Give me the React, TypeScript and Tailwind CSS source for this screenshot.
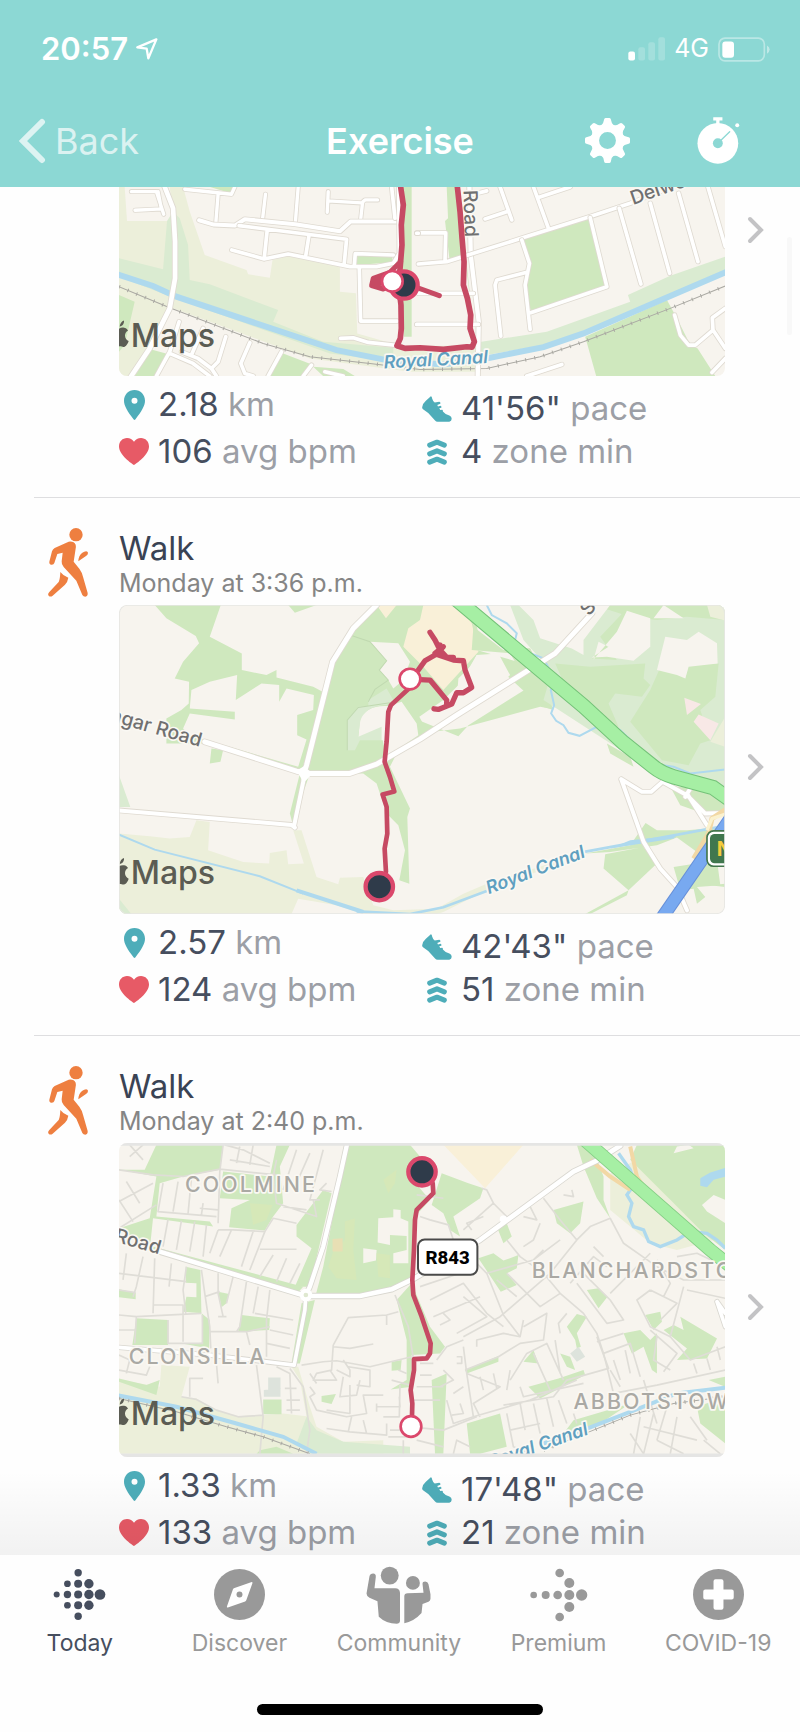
import type { ReactNode } from "react";

const CREAM = "#f7f4ee";
const GREEN = "#cfe8be";
const MINT = "#daebd1";
const OLIVE = "#ecefda";
const WATER = "#aed9ee";
const ROUTE = "#c64a63";

/* ---------- map primitives ---------- */

function Road({ d, w = 13, edge = "#dfdad1" }: { d: string; w?: number; edge?: string }) {
  return (
    <g fill="none" strokeLinecap="round" strokeLinejoin="round">
      <path d={d} stroke={edge} strokeWidth={w + 5} />
      <path d={d} stroke="#fff" strokeWidth={w} />
    </g>
  );
}

function Rail({ d }: { d: string }) {
  return (
    <g fill="none" stroke="#aaa9a3">
      <path d={d} strokeWidth={3} />
      <path d={d} strokeWidth={11} strokeDasharray="3 25" />
    </g>
  );
}

function Route({ d, w = 14 }: { d: string; w?: number }) {
  return <path d={d} fill="none" stroke={ROUTE} strokeWidth={w} strokeLinejoin="round" strokeLinecap="round" />;
}

function StartDot({ x, y }: { x: number; y: number }) {
  return <circle cx={x} cy={y} r={31} fill="#fff" stroke="#db486c" strokeWidth={8} />;
}

function EndDot({ x, y }: { x: number; y: number }) {
  return <circle cx={x} cy={y} r={41} fill="#2f3b4a" stroke="#db486c" strokeWidth={13} />;
}

function Attribution({ y }: { y: number }) {
  return (
    <g fill="#5b5c53">
      <path
        transform={`translate(28 ${y})`}
        d="M0-54C5-57 10-58 15-57C20-57 24-53 27-49C21-45 18-40 18-33C18-25 23-20 29-17C27-10 23-3 17 0C11 2 7-2 0-1ZM2-61C3-70 8-77 15-79C16-71 11-62 2-61Z"
      />
      <text x={63} y={y} className="text-[96px] font-medium">
        Maps
      </text>
    </g>
  );
}

function Label({
  x,
  y,
  rotate = 0,
  className,
  children,
}: {
  x: number;
  y: number;
  rotate?: number;
  className: string;
  children: ReactNode;
}) {
  return (
    <text
      transform={`translate(${x} ${y}) rotate(${rotate})`}
      stroke="#faf8f3"
      strokeWidth={10}
      strokeLinejoin="round"
      paintOrder="stroke"
      className={className}
    >
      {children}
    </text>
  );
}

const ROAD_LABEL = "fill-[#707070] text-[58px] font-medium";
const WATER_LABEL = "fill-[#5f9fc0] text-[54px] font-semibold italic";
const TOWN_LABEL = "fill-[#aaa9a4] text-[64px] font-medium tracking-widest";

/* ---------- maps ---------- */

function MapCanalLoop() {
  return (
    <svg viewBox="28 6 1816 567" preserveAspectRatio="xMidYMid slice" className="block h-[189px] w-full rounded-b-lg" role="img" aria-label="Route map">
      <rect x={0} y={0} width={1900} height={600} fill={CREAM} />
      <path fill={OLIVE} d="M28 6H220L240 80L285 210L410 255L415 268L480 278L488 225L560 208L690 240V320L738 325L742 445L870 482H1110V560H900L600 520L190 370L120 500L60 573H28Z" />
      <path fill={CREAM} d="M45 6H180L192 108H52Z" />
      <path fill={MINT} d="M28 220L160 253L172 108L190 80L210 100L235 180L240 285L300 298L505 375L490 410L640 470L850 488V530L660 505L195 340L28 275Z" />
      <path fill={MINT} d="M1100 472L1310 440L1560 350L1553 330L1680 272L1845 215V270L1640 350L1420 440L1300 480L1100 515Z" />
      <g fill={GREEN}>
        <path d="M28 330L75 350L45 480L28 500ZM125 493L185 510L140 573H75ZM520 505L610 540L575 573H480ZM610 545L700 552L735 573H640Z" />
        <path d="M1240 160L1437 98L1490 302L1262 380L1245 290L1258 235Z" />
        <path d="M1425 455L1670 345L1700 400L1740 480L1762 490L1815 573H1458Z" />
        <path d="M868 6H905V455H882ZM1010 6H1045L1095 470L1075 300L1065 215L1018 220L1005 108L1014 100Z" />
        <path d="M735 212H845L850 232L740 240ZM300 6H370L360 24Z" />
      </g>
      <path fill="none" stroke={WATER} strokeWidth={18} d="M20 267L130 303L200 335L680 495L830 525L1000 538L1140 518L1300 486L1420 445L1640 350L1850 260" />
      <Rail d="M28 305L180 368L460 475L600 515L780 535L930 553L1130 550L1290 515L1420 470L1680 370L1845 303" />
      <Road d="M65 20H140L162 88M145 20L155 72L76 76M225 13L365 28L375 6M325 28L318 115M467 28L458 104M565 6L556 118M655 20L652 82M655 48L755 54L765 45H803M758 52L752 105" w={10} />
      <Road d="M268 106L312 119L375 122L405 103L556 118L690 139L722 110H865" w={12} />
      <Road d="M388 122L710 163L703 235M472 137L463 222M597 153L588 210M366 195L463 222L535 207L720 245H800L850 235L868 205L866 6M733 243L736 206L850 210M748 245L752 408H862M692 460L730 458L775 472L870 482M845 6L855 100" w={11} />
      <Road d="M165 6L190 70L196 170V280L180 370L120 490L60 580" w={14} />
      <Road d="M208 410L180 500L140 573M180 505L250 535L300 573M215 500L265 520L305 550L325 530L348 455M305 550L320 573M280 430L245 510M420 473L393 535L405 565L430 573M515 500L475 573M605 540L580 573M645 560L700 573" w={11} />
      <Road d="M1078 6L1082 210L1106 410L1103 573" w={13} />
      <Road d="M925 237L1010 230L1240 158L1440 95L1560 55L1650 20M1005 225L1007 144H920M1130 18L1090 28M1170 6L1205 105M1192 80L1125 102M1270 6L1315 130M1285 38L1380 6" w={11} />
      <Road d="M1235 165L1258 235L1245 300L1260 433M1250 262L1160 285L1155 300L1172 453M1262 383L1490 305L1440 98M1527 70L1592 297M1620 55L1678 265M1705 25L1763 230M1793 6L1845 185" w={11} />
      <Road d="M925 145L920 145M925 325H1090M920 418H1105M1355 538L1250 573M1693 390L1710 450L1735 480H1755L1808 435L1845 490M1808 435L1806 398L1845 370M1805 562L1845 520" w={11} />
      <Label x={1060} y={16} rotate={88} className={ROAD_LABEL}>Road</Label>
      <Label x={1568} y={60} rotate={-19} className={ROAD_LABEL}>Delwood</Label>
      <Label x={822} y={550} rotate={-3} className={WATER_LABEL}>Royal Canal</Label>
      <Route w={17} d="M872 6L880 60L874 120L876 180L872 230L866 300L873 360L874 430L871 460L861 482L885 490L930 488L1000 493L1070 485L1086 486L1093 470L1080 430L1082 390L1072 340L1060 300L1062 230L1056 160L1050 80L1042 6" />
      <Route w={15} d="M872 230L840 262L790 280L785 302L820 312L850 300L800 292L830 275M900 300L988 332" />
      <EndDot x={882} y={300} />
      <StartDot x={847} y={289} />
      <Attribution y={485} />
    </svg>
  );
}

function MapAshtown() {
  return (
    <svg viewBox="28 15 1816 926" preserveAspectRatio="xMidYMid slice" className="block h-[309px] w-full rounded-lg" role="img" aria-label="Route map">
      <rect x={0} y={0} width={1900} height={960} fill={CREAM} />
      <path fill={OLIVE} d="M28 700L120 708L180 715L240 710L260 660L300 665L295 750L400 785L478 790L480 758L530 750L535 792L582 790L550 690L575 690L620 830L685 852L690 832L760 830L790 915L850 930L980 925L1060 880L1130 850L1240 815L1350 780V790L1130 870L1000 935L980 941H28ZM565 895L545 941H760L680 915Z" />
      <g fill={GREEN}>
        <path d="M135 15H333L300 110L396 160V210L470 225L500 210V232L610 260L638 275L665 190L720 105L790 15H1085L1105 100L1100 150L1240 190L1190 155L1200 140L1260 145L1330 330L1290 318L1140 180L1100 165L1085 190L1050 250L1000 300L928 350L955 400L925 425L860 460L840 500L900 625L892 650L898 850L868 840L885 750L865 675L830 640L800 550L760 520H600L548 670L540 640L570 520L280 430L170 430L170 355L215 330L237 310L238 245L195 235L220 185L268 130L258 108L170 55Z" />
        <path d="M535 15H620L555 38ZM565 345L640 310L600 430L562 405ZM305 445L340 450L332 485L300 490Z" />
        <path d="M1450 15H1845V60L1640 60L1560 40Z" />
        <path d="M900 350L1045 408L1075 375L1330 215L1345 260L1320 325L1290 320L1050 385L925 400Z" />
      </g>
      <g fill={CREAM}>
        <path d="M245 270L300 245L382 225L378 300L455 250L508 255V305L530 265L612 285L610 330L562 345V405L590 418L565 500L240 405L220 385L240 340L375 358V335L240 325Z" />
        <path d="M780 125L865 130L900 185L880 240L850 265L835 240L808 210L830 182ZM750 360C760 330 790 315 835 318L875 305L920 370L925 405L830 470L818 420L745 412ZM1045 235L1085 195L1100 165L1165 160L1200 225L1080 330L1040 300Z" />
      </g>
      <path fill={MINT} d="M712 450V360L745 320L775 318V300L830 265L850 300L830 315C790 315 755 335 750 370L745 410L815 380V420H750L735 450ZM28 525L62 620L28 620ZM28 895L65 941H28Z" />
      <path fill="none" stroke="#c0d9b0" strokeWidth={3} d="M720 105L780 125L830 182L808 210L835 240L795 268L775 305M712 450V360L745 322L840 308" />
      <path fill="#f9f0d8" d="M940 15H1050L1085 70L1105 155L1000 270L940 200L880 140L895 85L930 60ZM800 15H860L828 55Z" />
      {/* parkland east of the motorway */}
      <path fill={MINT} d="M1130 15H1845V580L1640 520L1300 300L1325 215L1240 120L1200 15Z" />
      <g fill={GREEN}>
        <path d="M1090 80L1180 150L1260 145L1300 215L1215 185L1200 160L1085 150Z" />
        <path d="M1450 15H1790L1845 60L1730 50L1640 60L1560 50ZM1335 190L1440 200L1605 190L1600 235L1620 255L1595 290L1515 280L1495 310L1525 380H1480L1380 290Z" />
        <path d="M1735 195L1825 190L1815 290L1770 330L1800 420L1770 430L1735 495L1655 480L1560 365L1620 270L1660 180L1700 210L1725 235ZM1560 15H1620L1500 120L1445 175L1520 180L1470 110Z" />
      </g>
      <g fill={CREAM}>
        <path d="M1450 178L1520 95L1550 32L1620 55V140L1570 182L1490 170L1445 172L1495 140L1465 125ZM1640 210L1665 110L1730 120L1765 95L1820 130L1822 190L1735 200L1725 235L1700 225ZM1630 55L1660 15L1720 55ZM1225 15H1500L1420 120V165L1385 145L1290 115L1270 60Z" />
      </g>
      <path fill="#f8e8e6" d="M1722 293L1772 312L1730 345ZM1750 365L1765 343L1825 370L1800 420Z" />
      <path fill={OLIVE} d="M1790 15H1845V62L1800 50ZM1845 350V440L1800 425Z" />
      <g fill={GREEN}>
        <path d="M1490 430L1560 470L1570 500L1500 460ZM1425 760L1560 735L1606 668L1640 690H1730L1845 680V850L1800 855L1845 860V720L1760 755L1700 712L1640 735L1500 755ZM1485 762L1600 740L1640 790L1555 870L1480 805ZM1555 870L1425 941H1440L1550 885ZM1680 560L1760 560L1845 600V640L1780 640L1710 615Z" />
        <path d="M1690 800L1820 780L1830 855L1760 860L1785 890L1760 910L1750 865L1710 870Z" />
      </g>
      <g fill="none" stroke={WATER} strokeWidth={6}>
        <path d="M20 700L135 748L450 828L580 880" />
        <path strokeWidth={12} d="M560 870L760 935" />
        <path d="M740 933L900 941L1000 921L1130 872M1410 757L1845 677" strokeWidth={8} />
        <path d="M1130 15L1145 45L1190 70L1220 100L1215 120L1235 150L1300 175L1335 240L1322 270L1332 315L1323 340L1338 362L1360 375L1375 398L1408 407L1460 380L1490 375L1530 390L1635 492L1690 500L1740 520L1845 508" />
      </g>
      <path fill={WATER} d="M1500 745L1560 720L1700 705L1690 715Z" />
      <Road d="M800 15L730 85L668 185L590 495L582 520" w={15} />
      <Road d="M285 425L560 513L600 520H718L800 492L930 417L1040 345L1335 160L1445 40" w={15} />
      <Road d="M582 520L580 545L553 675M20 630L545 674L555 682" w={12} />
      <path d="M560 512L582 498L608 520L582 548Z" fill="#fff" />
      <Road d="M1533 537L1595 575H1623L1657 545L1730 585L1785 640L1845 638M1533 537L1600 725L1650 805L1700 860L1730 930M1657 515L1735 530L1740 565L1725 590M1730 580L1790 675" w={12} />
      <path fill="none" stroke="#74c278" strokeWidth={46} d="M1020 -18L1420 318L1540 428L1630 500Q1655 520 1690 530L1808 562L1875 610" />
      <path fill="none" stroke="#a6efa4" strokeWidth={40} d="M1020 -18L1420 318L1540 428L1630 500Q1655 520 1690 530L1808 562L1875 610" />
      <path fill="none" stroke="#f2d8a5" strokeWidth={15} d="M1850 625L1805 655L1795 700L1750 775" />
      <path fill="none" stroke="#fbf2cf" strokeWidth={10} d="M1850 640L1805 655L1790 690" />
      <path fill="none" stroke="#668fd8" strokeWidth={40} d="M1650 960L1860 655" />
      <path fill="none" stroke="#78a9f0" strokeWidth={34} d="M1650 960L1860 655" />
      <rect x={1790} y={692} width={120} height={106} rx={20} fill="#fff" stroke="#43774d" strokeWidth={5} />
      <rect x={1799} y={701} width={120} height={88} rx={14} fill="#40774e" />
      <text x={1819} y={766} className="fill-[#f4cb3c] text-[60px] font-bold">N2</text>
      <Label x={-2} y={362} rotate={16} className={ROAD_LABEL}>ngar Road</Label>
      <Label x={1437} y={50} rotate={-52} className={ROAD_LABEL}>Sc</Label>
      <Label x={1136} y={882} rotate={-21} className={WATER_LABEL}>Royal Canal</Label>
      <Route d="M828 815L824 745L832 700L830 620L818 583L853 574L840 530L824 485L830 425L835 335L843 315L900 262" />
      <Route w={16} d="M925 210L945 182L975 165L990 150L975 120L960 97M990 135L985 165L1030 180L1060 182L1065 210L1085 262L1060 278H1040L1025 312L985 328L972 326M1010 312V300L960 240L900 237M975 160L1000 140L990 150L1010 172L1030 172" />
      <StartDot x={900} y={237} />
      <EndDot x={808} y={859} />
      <Attribution y={852} />
      <rect x={29} y={16} width={1814} height={924} rx={24} fill="none" stroke="#e6e6e3" strokeWidth={3} />
    </svg>
  );
}

function MapCoolmine() {
  return (
    <svg viewBox="28 9 1816 942" preserveAspectRatio="xMidYMid slice" className="block h-[314px] w-full rounded-lg" role="img" aria-label="Route map">
      <rect x={0} y={0} width={1900} height={970} fill={CREAM} />
      <path fill={OLIVE} d="M28 720L150 740L155 675L240 680L215 770L260 775L320 810L385 828L455 825L520 820L590 828L570 720L545 680L565 680L600 800L620 860L700 905L820 900V941H28Z" />
      <path fill={OLIVE} d="M1500 100L1580 60L1680 180L1810 300L1700 330L1620 310L1560 260L1500 210Z" />
      <g fill={GREEN}>
        <path d="M140 15H340L330 90L220 110L150 130L140 230L300 245L310 260L130 235L120 330L28 265L120 235L140 110L28 90H105Z" />
        <path d="M710 15H900L930 50L925 140L960 180L915 230L905 420L840 450L740 475H615L640 380ZM340 95L480 110L500 15H540L510 80L520 190L490 230L465 272L358 262L365 205L420 180L330 175Z" />
        <path d="M560 255L640 150L665 160L600 440L555 440L605 325L560 290ZM80 535L175 540V615H68ZM228 380L272 390L275 520L300 540L298 625L225 612L278 608L276 520L220 515L230 470L260 472V430L228 428ZM325 455L358 462L350 490L335 502ZM395 525L480 535L478 570L385 575ZM28 448L78 458V478L28 472Z" />
        <path d="M130 320L580 440L560 462L120 330ZM575 490L615 480L570 670L545 670ZM28 715L110 735L150 720L140 765L28 725ZM460 778H515V822H460ZM635 768L678 762L665 792L635 785ZM845 665L875 660L872 690L845 692ZM860 480L905 430L960 560L1005 620L990 640L905 645L905 740L842 748L890 720V600Z" />
        <path d="M995 100L1075 130L1120 145L1110 175L1030 230L1050 290L1020 270L1000 220L965 195ZM1105 355L1150 340L1180 362L1225 345L1220 385L1190 400L1220 435L1172 455ZM1330 210L1420 185L1410 250L1380 280L1340 250ZM1160 260L1190 250L1205 290L1180 310ZM1430 450L1465 445L1492 470L1465 505ZM1480 110L1445 20L1400 15L1420 80L1460 175L1500 235L1480 180Z" />
        <path d="M1255 740L1345 715L1420 690L1425 705L1290 775ZM1540 580L1590 570L1620 600L1640 580V700L1625 690L1600 620L1565 640ZM1700 660L1730 625L1660 570L1690 555L1720 570L1710 530L1820 595L1790 655ZM1605 525L1650 515L1655 545L1630 570ZM1070 850L1170 820L1190 920L1110 941H1080ZM1065 690L1165 648V665L1070 700ZM965 720L1010 700L1000 941H975ZM1430 530L1400 522L1370 560L1395 600L1400 625L1412 620L1400 580ZM1240 665L1270 630L1285 670ZM1350 640L1370 680L1395 690L1380 650ZM1760 800L1845 770V910L1770 850ZM1795 720L1845 710V740ZM1390 840L1560 790L1470 850L1360 880ZM450 930L500 920L550 941H440Z" />
        <path d="M1580 15H1845V330L1780 280L1560 60Z" />
      </g>
      <path fill={CREAM} d="M805 235L850 232V208L872 210V235L895 245V370H850V340L890 330V288L840 285V315L803 308ZM760 325L800 330L798 362L760 370ZM1775 195L1810 165L1845 180V250L1790 215ZM1690 40L1750 25L1735 15L1700 20Z" />
      <path fill="#d6e8b8" d="M705 245L735 235L730 330L740 420L680 415L655 380L670 335L705 300ZM820 120L860 90L855 130L835 160ZM420 190L488 195L470 240L430 255ZM800 340L840 345V415L805 410Z" />
      <path fill="#f9f0d8" d="M1000 15H1240L1125 145ZM1170 15H1240L1140 120Z" />
      <path fill="#e8dfb4" d="M668 297L698 295V335H668Z" />
      <path fill="#dde3dc" d="M475 712H512V750H475ZM462 750L512 745V770H462ZM1380 640L1405 620L1425 650L1400 665Z" />
      <path fill={MINT} d="M590 830L620 870L700 905L900 920V941H600L560 910Z" />

      {/* residential streets */}
      <g fill="none" stroke="#dfddd7" strokeWidth={5} strokeLinejoin="round">
        <path d="M28 90L130 105L220 110L330 88L500 105M340 15L330 95L325 250M28 185L130 130M28 265L140 195M28 180L70 245M60 15L100 60M100 15L60 50M90 190L50 125M160 130L145 215L320 230M205 125L190 215M245 115L235 220M280 190L275 225M270 205L325 210M175 238L160 320M215 242L200 330M255 245L240 335M290 255L280 350M325 270L300 340M365 270L330 350M325 270H370L465 275L490 235L560 250M430 275L395 380M465 275L420 390M450 328H560M490 345L450 410M530 355L500 425M570 370L540 430M345 15L400 30L480 70M360 60L480 80M390 20L380 70M430 15L420 75M500 60L490 110L500 190L620 230L610 180M560 30L520 150M600 40L560 130M640 30L600 180L630 180M650 130L630 150L665 155M520 200L590 210" />
        <path d="M50 340L40 420M100 350L80 440L70 470M135 355L130 520M185 370L178 440M230 380L220 450L228 520M28 400L230 425M28 450L78 458M28 525L80 530L75 610M80 530L275 520M130 495L220 495V605M175 540V610H278V525M28 570H75M275 390L285 460L300 560L303 625M325 400V460L340 530M285 470L330 455M325 530H350M370 410L350 490M410 425L390 560L380 575M300 575H410L480 560M410 575L420 615M445 440L430 520M480 450L470 540V650M435 520L550 540M480 570L550 585M470 610L540 625M28 645L60 660L50 700M28 690L110 705L120 680M320 670L325 730M240 770V715H280M440 675L460 830L450 941M215 770L260 778L320 810L385 830L460 825M500 680L540 700L545 820M540 685L580 740L600 870L590 941M530 780H570M530 810H570M525 745H560" />
        <path d="M575 675L640 665L680 662L780 680L905 650M670 615L715 533L830 525L865 515M830 525V555M670 615L665 690L620 700L610 720H680L660 690M670 620L720 625L790 612M600 700L620 730M680 690L720 710V690L700 660M715 680L780 690V740L740 735M700 710L690 770L740 765L750 720M720 735V820L650 810M600 740L615 760L600 770L620 810L710 830L770 820L760 765H820M800 790V815M800 800H870L868 770M830 850L830 885L720 875L650 865M760 840L770 880M715 875L725 830M855 465L895 560L910 655M865 690L890 700M845 720L900 735M870 735L868 830L820 830M840 870H905M835 890H900M880 900V941" />
        <path d="M920 165L1000 175M930 230L960 240L1015 255L1030 300L1130 400L1180 525L1230 590M1130 400L1270 360L1300 330M1060 270L1150 190L1130 150L1115 145M1150 190L1200 240M1085 270L1070 250L1120 230M1240 230L1280 240L1260 200M1300 175L1350 240L1400 300L1320 400L1170 530L1060 590M1240 320L1270 300L1290 250M1360 165L1390 170L1385 150M1190 300L1230 350L1300 400L1350 460L1420 520L1460 580L1480 640L1510 760M1400 300L1440 260L1500 235L1540 310L1640 380L1720 420H1845M1270 360L1350 300M1380 430L1450 350L1490 380M1450 320L1480 350M1420 400L1500 480L1540 540L1490 550L1400 430M1500 460L1580 380L1620 340M1540 540L1500 480M1620 450L1580 480L1620 560L1680 590L1720 440M1620 450L1700 490L1650 540M1660 470L1680 430L1640 360M1700 350L1760 340L1845 380M1730 450L1845 475" />
        <path d="M930 440L1050 400M960 480L1060 430L1130 520L1180 560M970 530L1110 470M1040 580L1130 530L1060 470M990 555L1020 540L1000 520M1160 420L1220 470M1190 400L1290 500L1350 460M1100 620V600L1180 580L1230 590L1240 540M1065 690L1165 650L1230 610L1300 600L1310 520L1240 560M1350 580L1345 550L1370 520M980 660L1010 620L1060 600M1060 620L1070 700L1090 830L1030 850L1010 780M1040 650H1055V670H1040M1070 700L1170 740L1090 790L1110 830M1110 710L1120 750M1150 700L1160 745M1200 690L1190 750M1200 720L1250 640L1310 610L1360 720M1180 795L1330 770L1370 720L1495 685L1460 590M1090 830L1260 780L1400 720M1230 790L1245 870M1270 790L1290 880M1310 775L1330 860M1345 780L1370 850M1230 740L1240 770L1420 730M1335 600L1350 700M1270 640L1320 750M1460 605L1540 580M1480 640L1560 610L1590 710M1500 690L1530 740M1510 660L1530 720M1545 630L1560 700M1510 760L1640 735L1845 690M1620 570L1700 640L1660 695M1640 590L1630 660L1680 690M1680 590L1740 660L1845 620M1750 670L1760 700M1790 655L1800 690M1820 620L1830 660M1860 610L1850 640" />
        <path d="M930 670H970M930 705H965M920 740H1000M910 780H990M900 860L1000 870L1100 830M1000 690L1030 720L990 740M1030 760L1060 740M1025 825L1060 820L1050 790M1030 941L1040 900L1080 920M1190 820L1210 920L1260 941M1200 870L1290 850M1590 830L1570 941M1630 820L1600 941M1670 800L1640 900M1700 830L1680 941M1740 830L1790 900M1600 860L1760 900M1640 900L1720 941M1560 880L1600 941M1780 900L1830 941M1390 820L1400 850M1600 720L1640 850M920 900L1000 920" />
      </g>

      <g fill="none" stroke={WATER}>
        <path strokeWidth={12} d="M20 765L200 800L380 850L520 890L620 941M1300 910L1440 862L1560 815L1700 760L1850 742" />
        <path strokeWidth={10} d="M1525 40L1560 90L1575 130L1550 165L1565 190L1555 230L1570 260L1600 270L1615 305L1650 320L1700 300L1740 275L1790 280L1820 300L1845 325" />
      </g>
      <path fill={WATER} d="M1770 115L1800 98L1845 84V110L1810 120L1790 142L1770 138Z" />
      <Rail d="M28 775L200 815L350 860L460 890L600 941M1300 930L1450 870L1560 825L1690 790L1845 770" />
      <path fill="none" stroke="#f2d8a5" strokeWidth={12} d="M1440 60L1500 110L1560 150M1560 20L1580 110L1610 155" />
      <Road d="M712 10L690 110L640 320L600 440L588 465" w={13} edge="#d9d7d0" />
      <Road d="M150 335L560 460L588 468H750L845 448L910 417L1110 300L1390 95L1460 62L1530 18" w={14} edge="#d9d7d0" />
      <Road d="M588 465L585 510L553 675M553 675L470 665L300 645L28 622M1820 485L1845 560M1820 485L1845 520" w={11} edge="#d9d7d0" />
      <circle cx={588} cy={465} r={13} fill="#dfe8d0" stroke="#fff" strokeWidth={12} />
      <circle cx={1180} cy={238} r={11} fill="#fff" />
      <path fill="none" stroke="#86cf86" strokeWidth={41} d="M1400 -20L1800 330L1880 395" />
      <path fill="none" stroke="#a6efa4" strokeWidth={36} d="M1400 -20L1800 330L1880 395" />

      <Label x={226} y={157} className={TOWN_LABEL}>COOLMINE</Label>
      <Label x={57} y={672} className={TOWN_LABEL}>CLONSILLA</Label>
      <Label x={1265} y={414} className={TOWN_LABEL}>BLANCHARDSTOWN</Label>
      <Label x={1390} y={806} className={TOWN_LABEL}>ABBOTSTOWN</Label>
      <Label x={12} y={304} rotate={16} className={ROAD_LABEL}>Road</Label>
      <Label x={1141} y={984} rotate={-19} className={WATER_LABEL}>Royal Canal</Label>
      <Route d="M968 130L970 160L920 210L915 240L912 330L907 420L910 465L935 530L962 610L960 640L950 655L912 657V690L902 750L907 790L906 830" />
      <rect x={924} y={299} width={178} height={105} rx={20} fill="#fff" stroke="#4a4a4a" strokeWidth={6} />
      <text x={1013} y={372} textAnchor="middle" className="fill-black font-[Roboto] text-[56px] font-extrabold">R843</text>
      <EndDot x={936} y={96} />
      <StartDot x={903} y={859} />
      <Attribution y={854} />
      <path fill="#e5e5e4" d="M28 9H1844V18H28ZM28 940H1844V951H28Z" />
    </svg>
  );
}

/* ---------- icons ---------- */

function PinIcon() {
  return (
    <svg viewBox="0 0 21 30" className="h-[30px] w-[21px] fill-[#4eadb9]" aria-hidden="true">
      <path fillRule="evenodd" d="M10.500 0C4.500 0 0 4.600 0 10.800C0 16 3.600 21.500 9.700 29.500Q10.500 30.400 11.300 29.500C17.400 21.500 21 16 21 10.800C21 4.600 16.500 0 10.500 0ZM10.500 7.800A3 3 0 1 1 10.500 13.800A3 3 0 1 1 10.500 7.800Z" />
    </svg>
  );
}

function HeartIcon() {
  return (
    <svg viewBox="0 0 30 27" className="h-[27px] w-[30px] fill-[#e75a66]" aria-hidden="true">
      <path d="M15 27C13 25.800 0 17 0 8.500C0 3.500 3.500 0 8 0C11 0 13.500 1.400 15 3.800C16.500 1.400 19 0 22 0C26.500 0 30 3.500 30 8.500C30 17 17 25.800 15 27Z" />
    </svg>
  );
}

function ShoeIcon() {
  return (
    <svg viewBox="66 44 92 80" className="h-[26px] w-[30px] fill-[#4eadb9]" aria-hidden="true">
      <path d="M93 45C96 45 96 48 97 52Q99 60 105 64L119 62Q124 63 122 68L113 72L115 76L123 74Q127 76 125 80L119 82L122 87L128 86Q131 88 130 92Q137 101 150 104Q158 107 157 115Q157 122 150 123H114Q109 123 106 119L85 96L69 85Q65 82 67 76Q69 66 77 59Z" />
    </svg>
  );
}

function ZoneIcon() {
  return (
    <svg viewBox="0 0 60 77" className="h-[26px] w-5 fill-none stroke-[#4eadb9]" aria-hidden="true">
      <path strokeWidth={15} strokeLinecap="round" strokeLinejoin="round" d="M8 18L30 9L52 18M8 44L30 35L52 44M8 69L30 60L52 69" />
    </svg>
  );
}

function WalkIcon() {
  return (
    <svg viewBox="54 444 120 207" className="h-[69px] w-10 fill-[#ee7f40]" aria-hidden="true">
      <circle cx={138} cy={464} r={20} />
      <path d="M116 485Q132 483 137 494Q139 500 136 512L131 545L148 566Q156 577 159 590L173 639Q174 649 166 650Q160 650 157 645L139 602L101 561Q94 554 95 544L98 518L82 522L73 549Q71 555 64 554Q57 553 58 545L66 514Q68 508 74 504Z" />
      <path d="M91 576Q99 587 115 593Q113 606 105 614L68 647Q61 652 56 647Q52 642 58 636L86 606Q90 599 91 576Z" />
      <path d="M145 544Q146 526 156 519Q168 511 173 516Q176 523 168 528Z" />
    </svg>
  );
}

function GearIcon() {
  const teeth = [0, 45, 90, 135, 180, 225, 270, 315];
  return (
    <svg viewBox="0 0 136 136" className="size-[45px]" aria-hidden="true">
      <g fill="#fff">
        {teeth.map((a) => (
          <path key={a} transform={`rotate(${a} 68 68)`} d="M48 24Q56 18 58 4Q59 0 63 0H73Q77 0 78 4Q80 18 88 24Z" />
        ))}
      </g>
      <circle cx={68} cy={68} r={38} fill="none" stroke="#fff" strokeWidth={25} />
    </svg>
  );
}

function StopwatchIcon() {
  return (
    <svg viewBox="892 350 130 143" className="h-[47px] w-[43px]" aria-hidden="true">
      <g fill="#fff">
        <circle cx={955} cy={430} r={62} />
        <path d="M941 351H969V361H960V372H950V361H941Z" />
        <circle cx={1014} cy={375} r={6} />
      </g>
      <circle cx={955} cy={430} r={15} fill="#8cd8d4" />
      <path d="M962 423L991 395" stroke="#8cd8d4" strokeWidth={4} strokeLinecap="round" />
    </svg>
  );
}

function Dots({ viewBox, dots, className }: { viewBox: string; dots: number[][]; className: string }) {
  return (
    <svg viewBox={viewBox} className={className} aria-hidden="true">
      {dots.map(([x, y, r]) => (
        <circle key={`${x}-${y}`} cx={x} cy={y} r={r} />
      ))}
    </svg>
  );
}

function TodayIcon() {
  return (
    <Dots
      viewBox="160 355 158 158"
      className="size-[53px] fill-[#464e5e]"
      dots={[
        [171, 434, 9], [203, 402, 10], [203, 434, 11], [203, 466, 10],
        [235, 369, 11], [235, 402, 12], [235, 434, 12], [235, 466, 12], [235, 499, 11],
        [267, 402, 14], [267, 434, 14], [267, 466, 14], [300, 434, 16],
      ]}
    />
  );
}

function PremiumIcon() {
  return (
    <Dots
      viewBox="392 353 174 162"
      className="h-[54px] w-[58px] fill-[#999]"
      dots={[
        [403, 434, 10], [439, 434, 12], [475, 434, 13], [510, 434, 15], [547, 434, 17],
        [481, 368, 13], [510, 398, 15], [510, 470, 15], [481, 500, 13],
      ]}
    />
  );
}

function DiscoverIcon() {
  return (
    <svg viewBox="0 0 154 154" className="size-[51px]" aria-hidden="true">
      <circle cx={77} cy={77} r={77} fill="#999" />
      <path fill="#fff" d="M114 39Q117 39 116 43L98 93Q97 96 94 98L42 116Q38 117 39 113L57 62Q58 58 62 57Z" />
      <circle cx={77} cy={77} r={9} fill="#999" />
    </svg>
  );
}

function CommunityIcon() {
  return (
    <svg viewBox="1102 345 195 175" className="h-[58px] w-[65px] fill-[#999]" aria-hidden="true">
      <circle cx={1173} cy={374} r={27} />
      <circle cx={1243} cy={396} r={21} />
      <path d="M1112 376Q1114 368 1123 368Q1132 369 1131 378L1127 412H1190Q1203 412 1204 426V511Q1203 519 1194 519Q1162 519 1140 498L1136 451L1112 441Q1103 436 1103 428Z" />
      <path d="M1272 399Q1272 392 1280 392Q1288 392 1290 400L1296 430V444Q1296 450 1290 453L1272 460L1269 487Q1248 511 1217 518V436Q1217 427 1227 427L1275 426Z" />
    </svg>
  );
}

function CovidIcon() {
  return (
    <svg viewBox="0 0 154 154" className="size-[51px]" aria-hidden="true">
      <circle cx={77} cy={77} r={77} fill="#999" />
      <path fill="#fff" d="M68 31H86Q92 31 92 37V62H117Q123 62 123 68V86Q123 92 117 92H92V117Q92 123 86 123H68Q62 123 62 117V92H37Q31 92 31 86V68Q31 62 37 62H62V37Q62 31 68 31Z" />
    </svg>
  );
}

/* ---------- page ---------- */

function Stat({ icon, value, unit }: { icon: ReactNode; value: string; unit: string }) {
  return (
    <div className="flex h-[43px] items-center gap-[9px] text-[33px] leading-[43px] whitespace-nowrap">
      <span className="flex w-[30px] shrink-0 justify-center">{icon}</span>
      <span className="text-[#9c9fa6]">
        <span className="text-[#464e5e]">{value}</span> {unit}
      </span>
    </div>
  );
}

type Exercise = {
  when?: string;
  map: ReactNode;
  distance: string;
  bpm: string;
  pace: string;
  zone: string;
};

const exercises: Exercise[] = [
  { map: <MapCanalLoop />, distance: "2.18", bpm: "106", pace: "41'56\"", zone: "4" },
  { when: "Monday at 3:36 p.m.", map: <MapAshtown />, distance: "2.57", bpm: "124", pace: "42'43\"", zone: "51" },
  { when: "Monday at 2:40 p.m.", map: <MapCoolmine />, distance: "1.33", bpm: "133", pace: "17'48\"", zone: "21" },
];

function ExerciseRow({ when, map, distance, bpm, pace, zone }: Exercise) {
  return (
    <li className="ml-[34px] flex shrink-0 border-b border-[#dedee0]">
      <div className="w-[85px] shrink-0">
        {when && (
          <div className="pt-[30px] pl-[14px]">
            <WalkIcon />
          </div>
        )}
      </div>
      <div className="min-w-0 flex-1">
        {when && (
          <div className="h-[107px] pt-[30px]">
            <h2 className="text-[33px] leading-10 text-[#3a4354]">Walk</h2>
            <p className="text-[25px] leading-[30px] text-[#858585]">{when}</p>
          </div>
        )}
        {map}
        <div className="grid grid-cols-2 pt-[7px] pb-6">
          <div className="flex flex-col gap-1">
            <Stat icon={<PinIcon />} value={distance} unit="km" />
            <Stat icon={<HeartIcon />} value={bpm} unit="avg bpm" />
          </div>
          <div className="flex flex-col justify-end">
            <Stat icon={<ShoeIcon />} value={pace} unit="pace" />
            <Stat icon={<ZoneIcon />} value={zone} unit="zone min" />
          </div>
        </div>
      </div>
      <div className={when ? "flex w-[75px] shrink-0 items-center" : "flex w-[75px] shrink-0 items-start pt-[29px]"}>
        <button type="button" aria-label="Open exercise" className="ml-[22px]">
          <svg viewBox="0 0 18 28" className="block h-7 w-[18px] fill-none stroke-[#c3c3c5]" aria-hidden="true">
            <path d="M3 3L14 14L3 25" strokeWidth={4} strokeLinecap="round" />
          </svg>
        </button>
      </div>
    </li>
  );
}

const tabs = [
  { name: "Today", icon: <TodayIcon /> },
  { name: "Discover", icon: <DiscoverIcon /> },
  { name: "Community", icon: <CommunityIcon /> },
  { name: "Premium", icon: <PremiumIcon /> },
  { name: "COVID-19", icon: <CovidIcon /> },
];

export default function App() {
  return (
    <div className="flex h-screen flex-col bg-[#fefefe] font-[Inter,sans-serif]">
      <header className="shrink-0 bg-[#8cd8d4] text-white">
        <div className="flex h-[98px] items-center justify-between pr-[30px] pl-[41px]">
          <div className="flex items-center gap-2">
            <span className="text-[31px] font-semibold">20:57</span>
            <svg viewBox="410 114 66 66" className="size-[22px] fill-none stroke-white" aria-label="Location in use">
              <path d="M471 118L414 142L442 146L447 175Z" strokeWidth={7} strokeLinejoin="round" />
            </svg>
          </div>
          <div className="flex items-center gap-[9px]">
            <svg viewBox="0 0 111 71" className="h-6 w-[37px] fill-white" aria-label="Signal: one bar">
              <rect x={1} y={43} width={20} height={27} rx={6} />
              <g opacity={0.2}>
                <rect x={31} y={30} width={20} height={40} rx={6} />
                <rect x={61} y={15} width={20} height={55} rx={6} />
                <rect x={91} y={0} width={20} height={70} rx={6} />
              </g>
            </svg>
            <span className="text-[25px]">4G</span>
            <svg viewBox="952 110 156 74" className="h-[25px] w-[52px]" aria-label="Battery low">
              <rect x={955} y={113} width={136} height={68} rx={18} fill="none" stroke="#fff" strokeOpacity={0.4} strokeWidth={5} />
              <path d="M1099 135Q1107 140 1107 147T1099 160Z" fill="#fff" fillOpacity={0.45} />
              <rect x={965} y={123} width={35} height={49} rx={9} fill="#fff" />
            </svg>
          </div>
        </div>
        <div className="grid h-[89px] grid-cols-3 items-center pb-1">
          <a href="#back" className="flex items-center gap-[9px] pl-[18px] text-4xl text-white/70">
            <svg viewBox="0 0 28 46" className="h-[46px] w-7 fill-none stroke-current" aria-hidden="true">
              <path d="M24 4L5 23L24 42" strokeWidth={6} strokeLinecap="round" />
            </svg>
            Back
          </a>
          <h1 className="text-center text-4xl font-semibold">Exercise</h1>
          <div className="flex items-center justify-end gap-[67px] pr-[60px]">
            <button type="button" aria-label="Settings">
              <GearIcon />
            </button>
            <button type="button" aria-label="Start timer">
              <StopwatchIcon />
            </button>
          </div>
        </div>
      </header>

      <main className="relative min-h-0 flex-1 overflow-hidden">
        <ul className="flex flex-col">
          {exercises.map((e) => (
            <ExerciseRow key={e.distance} {...e} />
          ))}
        </ul>
        <div className="pointer-events-none absolute inset-x-0 bottom-0 h-[84px] bg-linear-to-b from-transparent to-black/5" />
        <div className="absolute top-[50px] right-2 h-[98px] w-[5px] rounded-full bg-[#f8f8f8]" />
      </main>

      <nav className="shrink-0 bg-[#fefefe] pt-[9px] pb-[17px]">
        <div className="grid grid-cols-5 pr-[2px]">
          {tabs.map((t, i) => (
            <a
              key={t.name}
              href={`#${t.name.toLowerCase()}`}
              className={i === 0 ? "text-center text-[23px] leading-9 text-[#464e5e]" : "text-center text-[23px] leading-9 text-[#999]"}
            >
              <span className="flex h-[61px] items-center justify-center">{t.icon}</span>
              {t.name}
            </a>
          ))}
        </div>
        <div className="mx-auto mt-[43px] h-[11px] w-[286px] rounded-full bg-black" />
      </nav>
    </div>
  );
}
